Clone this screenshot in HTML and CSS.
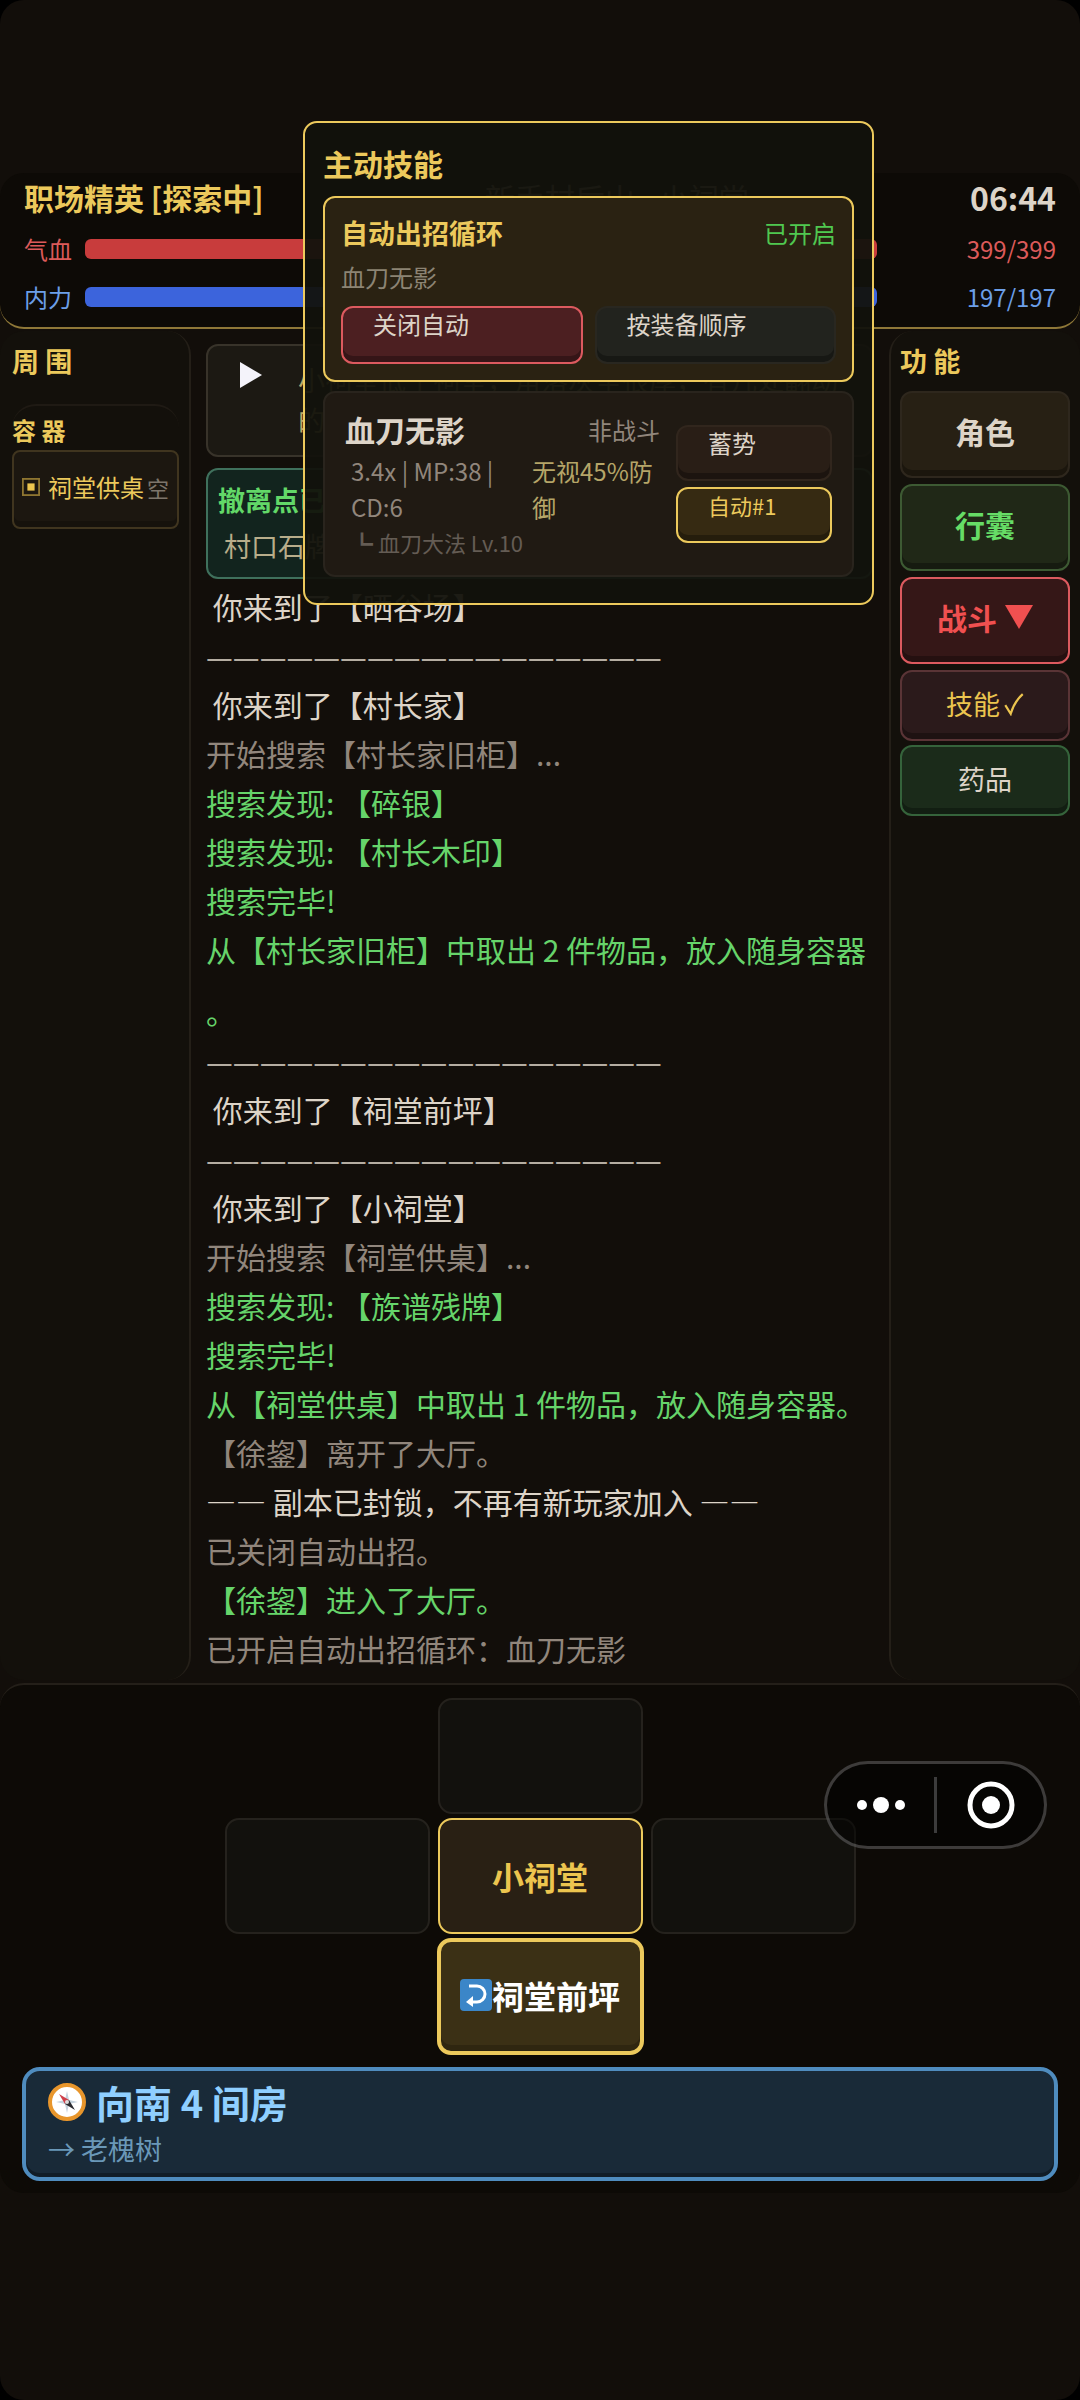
FILE: index.html
```html
<!DOCTYPE html>
<html lang="zh-CN">
<head>
    <meta charset="UTF-8">
    <meta name="viewport" content="width=device-width, initial-scale=1.0">
    <title>小祠堂</title>
    <link rel="stylesheet" href="styles.css">
</head>
<body>
<div class="game">

    <header class="status">
        <div class="status-top">
            <h1 class="player">职场精英 [探索中]</h1>
            <span class="place">新手村后山 - 小祠堂</span>
            <span class="clock">06:44</span>
        </div>
        <div class="stat hp">
            <span>气血</span>
            <div class="bar"></div>
            <span class="value">399/399</span>
        </div>
        <div class="stat mp">
            <span>内力</span>
            <div class="bar"></div>
            <span class="value">197/197</span>
        </div>
    </header>

    <main class="middle">
        <aside class="side left">
            <h2>周 围</h2>
            <section class="box-list">
                <h3>容 器</h3>
                <button class="container-item">
                    <svg class="box-icon" viewBox="0 0 20 20"><rect x="1" y="1" width="18" height="18" fill="none" stroke="#8f7631" stroke-width="2"/><rect x="6" y="6" width="8" height="8" fill="#ecc54f"/></svg>
                    <span>祠堂供桌</span>
                    <small>空</small>
                </button>
            </section>
        </aside>

        <section class="log">
            <div class="room">
                <svg class="play" viewBox="0 0 22 26"><path d="M0 0L22 13L0 26Z" fill="#f4f3fa"/></svg>
                <p>小祠堂低于祠堂，角落灰尘很厚，有几处翻动的痕迹。</p>
            </div>
            <div class="exit">
                <h3>撤离点已开启</h3>
                <p>村口石牌坊</p>
            </div>
            <div class="lines">
                <p>&nbsp;你来到了【晒谷场】</p>
                <p class="rule">—————————————————</p>
                <p>&nbsp;你来到了【村长家】</p>
                <p class="dim">开始搜索【村长家旧柜】...</p>
                <p class="good">搜索发现: 【碎银】</p>
                <p class="good">搜索发现: 【村长木印】</p>
                <p class="good">搜索完毕!</p>
                <p class="good">从【村长家旧柜】中取出 2 件物品，放入随身容器。</p>
                <p class="rule">—————————————————</p>
                <p>&nbsp;你来到了【祠堂前坪】</p>
                <p class="rule">—————————————————</p>
                <p>&nbsp;你来到了【小祠堂】</p>
                <p class="dim">开始搜索【祠堂供桌】...</p>
                <p class="good">搜索发现: 【族谱残牌】</p>
                <p class="good">搜索完毕!</p>
                <p class="good">从【祠堂供桌】中取出 1 件物品，放入随身容器。</p>
                <p class="dim">【徐鋆】离开了大厅。</p>
                <p>—— 副本已封锁，不再有新玩家加入 ——</p>
                <p class="dim">已关闭自动出招。</p>
                <p class="good">【徐鋆】进入了大厅。</p>
                <p class="dim">已开启自动出招循环：血刀无影</p>
            </div>
        </section>

        <aside class="side right">
            <h2>功 能</h2>
            <nav class="menu">
                <button class="role">角色</button>
                <button class="bag">行囊</button>
                <button class="fight">战斗
                    <svg class="caret" viewBox="0 0 28 24"><path d="M0 0H28L14 24Z" fill="#f05050"/></svg>
                </button>
                <button class="sub skill">技能
                    <svg class="tick" viewBox="0 0 18 22"><path d="M1 12L6 20Q9 9 17 2" fill="none" stroke="#ecc54f" stroke-width="2"/></svg>
                </button>
                <button class="sub drug">药品</button>
            </nav>
        </aside>
    </main>

    <footer class="travel">
        <div class="map">
            <div class="cell north"></div>
            <div class="cell west"></div>
            <div class="cell here">小祠堂</div>
            <div class="cell east"></div>
            <button class="cell south">
                <svg class="back" viewBox="0 0 32 32"><rect width="32" height="32" rx="4" fill="#3b86c8"/><path d="M9 7H17A8 8 0 0 1 17 23H13" fill="none" stroke="#fff" stroke-width="3"/><path d="M6 23L13 17V28Z" fill="#fff"/></svg>祠堂前坪
            </button>
        </div>
        <button class="guide">
            <span class="guide-title">
                <svg class="compass" viewBox="0 0 38 38"><circle cx="19" cy="19" r="17" fill="#fff" stroke="#e8962c" stroke-width="4"/><path d="M19 8L21 17L30 19L21 21L19 30L17 21L8 19L17 17Z" fill="#c5d3de"/><path d="M11 11L21 17L17 21Z" fill="#d0404a"/><path d="M27 27L21 17L17 21Z" fill="#2a2a2e"/><circle cx="19" cy="19" r="2" fill="#ddd"/></svg>
                向南 4 间房
            </span>
            <span class="guide-sub">→ 老槐树</span>
        </button>
    </footer>

    <div class="popup" role="dialog" aria-labelledby="popup-title">
        <h2 id="popup-title">主动技能</h2>
        <section class="auto">
            <div class="row">
                <h3>自动出招循环</h3>
                <span class="on">已开启</span>
            </div>
            <p>血刀无影</p>
            <div class="auto-actions">
                <button class="mini danger">关闭自动</button>
                <button class="mini order">按装备顺序</button>
            </div>
        </section>
        <section class="card">
            <div class="card-info">
                <div class="row">
                    <h3>血刀无影</h3>
                    <span>非战斗</span>
                </div>
                <div class="row detail">
                    <span class="cost">3.4x | MP:38 | CD:6</span>
                    <span class="effect">无视45%防御</span>
                </div>
                <p class="source">┗ 血刀大法 Lv.10</p>
            </div>
            <div class="card-actions">
                <button class="mini charge">蓄势</button>
                <button class="mini queued">自动#1</button>
            </div>
        </section>
    </div>

    <div class="capsule">
        <button aria-label="更多"><svg width="48" height="48" viewBox="0 0 48 48" fill="#fff"><circle cx="5" cy="24" r="5"/><circle cx="24" cy="24" r="8"/><circle cx="43" cy="24" r="5"/></svg></button>
        <button aria-label="关闭"><svg width="48" height="48" viewBox="0 0 48 48"><circle cx="24" cy="24" r="21" fill="none" stroke="#fff" stroke-width="5"/><circle cx="24" cy="24" r="9" fill="#fff"/></svg></button>
    </div>
</div>
</body>
</html>
```
FILE: styles.css
```css
* {
    margin: 0;
    padding: 0;
    box-sizing: border-box;
}

body {
    background: #000;
    color: #ddd4c8;
    font-family: "Noto Sans CJK SC", sans-serif;
    font-size: 24px;
}

button {
    border: 2px solid;
    border-radius: 12px;
    color: inherit;
    font-family: inherit;
    font-size: inherit;
    cursor: pointer;
}

h1, h2, h3 {
    color: #ecc95c;
}

.game {
    position: relative;
    display: flex;
    flex-direction: column;
    min-height: 100vh;
    padding: 173px 0 207px;
    background: #120e0a;
    border-radius: 24px;
}

/* status bar */
.status {
    padding: 0 24px 8px;
    height: 156px;
    background: #0d0a06;
    border-bottom: 2px solid #8f7838;
    border-radius: 24px;
}

.status-top {
    display: flex;
    align-items: center;
    justify-content: space-between;
    height: 48px;
    margin-bottom: 4px;
}

.player {
    font-size: 30px;
    line-height: 48px;
}

.place {
    font-size: 30px;
    color: #a89f92;
}

.clock {
    font-size: 32px;
    font-weight: bold;
}

.stat {
    display: flex;
    align-items: center;
    gap: 13px;
    height: 48px;
    line-height: 32px;
}

.bar {
    flex: 1;
    height: 20px;
    border-radius: 6px;
}

.value {
    width: 166px;
    text-align: right;
}

.hp { color: #dc5a5a; }
.hp .bar { background: #c83c3c; }
.mp { color: #6c9fe8; }
.mp .bar { background: #3c64dc; }

/* three columns */
.middle {
    display: flex;
    flex: 1;
    padding: 2px 0 3px;
}

.side {
    width: 191px;
    padding: 10px 10px 0 12px;
    background: #13100b;
    border-radius: 24px;
}

.side h2 {
    font-size: 27px;
    line-height: 40px;
}

.left {
    border-right: 2px solid #241f18;
}

.right {
    padding-left: 9px;
    border-left: 2px solid #241f18;
}

.box-list {
    margin-top: 23px;
    padding-top: 6px;
    border-top: 2px solid #1f1a14;
    border-radius: 24px;
}

.box-list h3 {
    margin-bottom: 2px;
    font-size: 24px;
    line-height: 36px;
}

.container-item {
    display: flex;
    align-items: center;
    width: 100%;
    height: 79px;
    padding: 0 8px 6px;
    background: #1c1710;
    border-color: #40351f;
    border-radius: 8px;
    color: #ecc95c;
    white-space: nowrap;
    box-shadow: inset 0 -6px rgba(0, 0, 0, 0.2);
}

.box-icon {
    width: 20px;
    height: 20px;
    margin-right: 8px;
}

.container-item small {
    margin-left: 3px;
    font-size: 22px;
    color: #7d756b;
}

.log {
    flex: 1;
    min-width: 0;
    padding: 13px 16px 0 15px;
}

.room {
    display: flex;
    align-items: flex-start;
    gap: 36px;
    height: 113px;
    padding: 14px 30px 14px 32px;
    background: #1c1913;
    border: 2px solid #38332a;
    border-radius: 12px;
    font-size: 27px;
    line-height: 40px;
    color: #b8a86a;
    overflow: hidden;
}

.play {
    flex: none;
    width: 22px;
    height: 26px;
    margin-top: 2px;
}

.exit {
    height: 111px;
    margin-top: 11px;
    padding: 8px 10px;
    background: #12241e;
    border: 2px solid #3f705c;
    border-radius: 12px;
    font-size: 27px;
    color: #b8ad8a;
}

.exit h3 {
    font-size: 27px;
    line-height: 44px;
    color: #62d868;
}

.exit p {
    padding-left: 6px;
    line-height: 48px;
}

.lines {
    margin-top: -4px;
}

.lines p {
    margin-bottom: -13px;
    font-size: 30px;
    line-height: 62px;
    line-break: anywhere;
    font-variant-ligatures: none;
    font-feature-settings: "ccmp" 0;
}

.lines .rule { color: #b5ada2; }
.lines .dim { color: #91867c; }
.lines .good { color: #66d46a; }

.menu {
    display: flex;
    flex-direction: column;
    gap: 6px;
    margin-top: 10px;
}

.menu button {
    display: flex;
    align-items: center;
    justify-content: center;
    gap: 4px;
    height: 87px;
    padding-bottom: 8px;
    font-size: 30px;
    font-weight: bold;
    box-shadow: inset 0 -6px rgba(0, 0, 0, 0.3);
}

.menu .sub {
    height: 71px;
    padding-bottom: 4px;
    font-size: 27px;
    font-weight: normal;
}

.menu .drug { margin-top: -2px; }

.role { background: #272014; border-color: #2e271d; }
.bag { background: #202817; border-color: #3d5a33; color: #66dc66; }
.menu .fight { background: #351717; border-color: #dc5a5f; color: #f05050; gap: 8px; }
.skill { background: #2b1a1b; border-color: #5a3436; color: #ecc54f; }
.drug { background: #1b2b1a; border-color: #35633b; }

.caret { width: 28px; height: 24px; }
.tick { width: 20px; height: 24px; }

/* map and guide */
.travel {
    padding: 13px 22px 12px;
    background: #0d0a06;
    border-top: 2px solid #241f19;
    border-radius: 24px;
}

.map {
    display: grid;
    grid-template-columns: repeat(3, 205px);
    grid-template-rows: 116px 116px 117px;
    grid-template-areas: ". n ." "w h e" ". s .";
    gap: 4px 8px;
    justify-content: center;
}

.cell {
    display: flex;
    align-items: center;
    justify-content: center;
    background: #12110d;
    border: 2px solid #25221d;
    border-radius: 14px;
    font-size: 32px;
    font-weight: bold;
}

.north { grid-area: n; }
.west { grid-area: w; }
.east { grid-area: e; }

.here {
    grid-area: h;
    background: #292014;
    border-color: #ecc95c;
    color: #ecc54f;
}

.south {
    grid-area: s;
    margin: 0 -1px;
    padding-bottom: 4px;
    background: #3b3015;
    border: 4px solid #ecc95c;
    color: #fff;
    box-shadow: inset 0 -6px rgba(0, 0, 0, 0.2);
}

.back {
    width: 32px;
    height: 32px;
}

.guide {
    display: flex;
    flex-direction: column;
    width: 100%;
    height: 114px;
    margin-top: 12px;
    padding: 4px 22px;
    background: #192a38;
    border: 4px solid #4f8cbe;
    border-radius: 18px;
    box-shadow: inset 0 -4px rgba(0, 0, 0, 0.3);
    text-align: left;
}

.guide-title {
    display: flex;
    align-items: center;
    gap: 10px;
    font-size: 38px;
    font-weight: bold;
    line-height: 54px;
    color: #8fcfff;
}

.compass {
    width: 38px;
    height: 38px;
}

.guide-sub {
    font-size: 27px;
    line-height: 40px;
    color: #6a98b8;
}

/* skill popup, floats over the page */
.popup {
    position: absolute;
    top: 121px;
    left: 303px;
    right: 206px;
    padding: 18px 18px 26px;
    background: rgba(18, 18, 12, 0.95);
    border: 2px solid #ecc95c;
    border-radius: 14px;
}

.popup h2 {
    font-size: 30px;
    line-height: 44px;
    margin-bottom: 11px;
}

.row {
    display: flex;
    align-items: center;
    justify-content: space-between;
}

.auto {
    height: 186px;
    padding: 13px 16px;
    background: #2a2212;
    border: 2px solid #ecc95c;
    border-radius: 12px;
    color: #8c8474;
}

.auto h3 {
    font-size: 27px;
    line-height: 44px;
}

.auto p {
    line-height: 44px;
}

.on {
    line-height: 40px;
    color: #50c850;
}

.auto-actions {
    display: grid;
    grid-template-columns: 1fr 1fr;
    gap: 12px;
    margin-top: 7px;
}

.mini {
    height: 56px;
    padding: 0 30px 20px;
    line-height: 32px;
    text-align: left;
    color: #ddd4c8;
    box-shadow: inset 0 -6px rgba(0, 0, 0, 0.3);
}

.auto-actions .mini {
    height: 58px;
    padding-bottom: 22px;
}

.danger { background: #4c1f21; border-color: #dc5a5f; }
.order { background: #22231e; border-color: #292720; }

.card {
    display: flex;
    gap: 16px;
    height: 186px;
    margin-top: 9px;
    padding: 12px 20px;
    background: #201a13;
    border: 2px solid #29241d;
    border-radius: 12px;
    color: #91867c;
}

.card-info {
    flex: 1;
}

.card h3 {
    font-size: 30px;
    line-height: 48px;
    color: #ddd4c8;
}

.detail {
    align-items: flex-start;
    line-height: 36px;
    padding-left: 6px;
}

.cost {
    width: 150px;
}

.effect {
    width: 128px;
    color: #b5a568;
}

.source {
    padding-left: 6px;
    font-size: 22px;
    line-height: 34px;
    color: #645c54;
}

.card-actions {
    display: flex;
    flex-direction: column;
    gap: 6px;
    width: 156px;
    margin-top: 20px;
}

.charge { background: #291e16; border-color: #31261d; }

.queued {
    padding-bottom: 24px;
    background: #362a12;
    border-color: #ecc95c;
    color: #ecc95c;
    font-size: 22px;
}

/* mini program capsule */
.capsule {
    position: absolute;
    top: 1761px;
    right: 33px;
    display: flex;
    align-items: center;
    width: 223px;
    height: 88px;
    background: rgba(0, 0, 0, 0.5);
    border: 3px solid rgba(255, 255, 255, 0.22);
    border-radius: 44px;
}

.capsule button {
    flex: 1;
    height: 56px;
    background: none;
    border: 0;
    border-radius: 0;
}

.capsule button + button {
    border-left: 3px solid #3c3c3c;
}

.capsule svg {
    display: block;
    margin: auto;
}
```
